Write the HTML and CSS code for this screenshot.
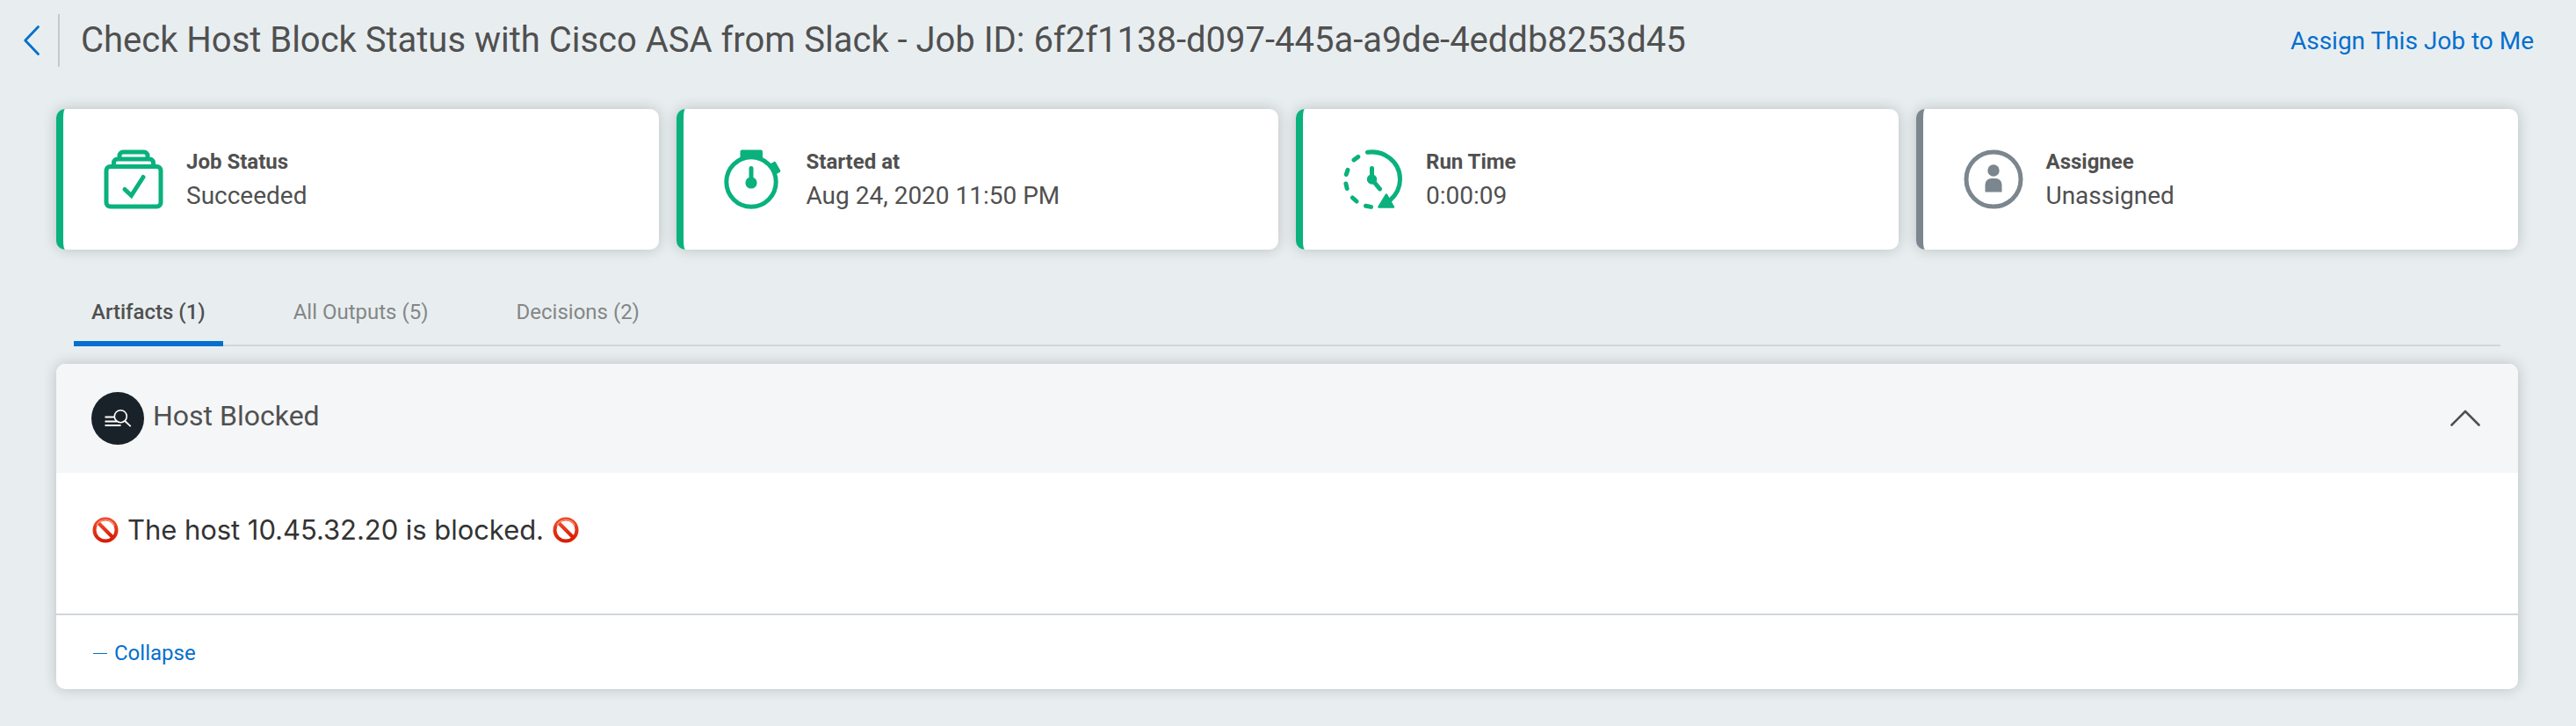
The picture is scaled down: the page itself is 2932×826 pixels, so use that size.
FILE: index.html
```html
<!DOCTYPE html>
<html lang="en">
<head>
<meta charset="utf-8">
<title>Job Details</title>
<link rel="stylesheet" href="styles.css">
</head>
<body>
<header class="topbar">
  <a class="back" aria-label="Back"><svg width="20" height="36" viewBox="0 0 20 36"><path d="M17.500 2.500 2.700 18 17.500 33.500"/></svg></a>
  <h1 class="title">Check Host Block Status with Cisco ASA from Slack - Job ID: 6f2f1138-d097-445a-a9de-4eddb8253d45</h1>
  <a class="assign">Assign This Job to Me</a>
</header>
<main class="content">
  <section class="cards">
    <article class="card">
      <svg class="card-icon" viewBox="0 0 68 68"><g fill="none" stroke="currentColor" stroke-width="5"><rect x="3" y="19.500" width="62" height="45.500" rx="4.500"/><path d="M11.500 18v-3a4 4 0 0 1 4-4h37a4 4 0 0 1 4 4v3M18 10V7a4 4 0 0 1 4-4h24a4 4 0 0 1 4 4v3"/><path d="m24 45.500 7.500 7L45 31.500" stroke-linecap="round"/></g></svg>
      <div class="card-text"><span class="label">Job Status</span><span class="value">Succeeded</span></div>
    </article>
    <article class="card">
      <svg class="card-icon" viewBox="0 0 68 68"><circle cx="31" cy="37" r="28.200" fill="none" stroke="currentColor" stroke-width="5"/><rect x="18.500" y="0.500" width="25.500" height="10" rx="2" fill="currentColor"/><rect x="54" y="14.500" width="8" height="13.500" rx="1.500" transform="rotate(-29 58 21)" fill="currentColor"/><path d="M31 21.500V38" stroke="currentColor" stroke-width="5" stroke-linecap="round"/><circle cx="31" cy="38" r="6.600" fill="currentColor"/></svg>
      <div class="card-text"><span class="label">Started at</span><span class="value">Aug 24, 2020 11:50 PM</span></div>
    </article>
    <article class="card">
      <svg class="card-icon" viewBox="0 0 68 68"><g fill="none" stroke="currentColor" stroke-width="5" stroke-linecap="round"><path d="M27.500 3.300C45 .6 64.500 13 64.500 34c0 10-4.500 18-11.500 24"/><path d="m12 12 4.800-3.600M3.300 28.500l1.700-5.200M2.900 39l1.300 5.500M10.500 55l4.500 4M25.500 64.200l6 1.200M32.500 21.500V34l9 11"/></g><circle cx="32.500" cy="34" r="5.700" fill="currentColor"/><path d="m49 51.500 8 14H40.500Z" fill="currentColor" stroke="currentColor" stroke-width="2.500" stroke-linejoin="round"/></svg>
      <div class="card-text"><span class="label">Run Time</span><span class="value">0:00:09</span></div>
    </article>
    <article class="card card-muted">
      <svg class="card-icon" viewBox="0 0 68 68"><circle cx="34" cy="34" r="31" fill="none" stroke="currentColor" stroke-width="5"/><circle cx="34" cy="24" r="6.700" fill="currentColor"/><path d="M24.500 48.500V40a7 7 0 0 1 7-7h5a7 7 0 0 1 7 7v8.500Z" fill="currentColor"/></svg>
      <div class="card-text"><span class="label">Assignee</span><span class="value">Unassigned</span></div>
    </article>
  </section>
  <nav class="tabs">
    <a class="tab tab-active">Artifacts (1)</a>
    <a class="tab">All Outputs (5)</a>
    <a class="tab">Decisions (2)</a>
  </nav>
  <section class="panel">
    <header class="panel-head">
      <svg class="badge" viewBox="0 0 60 60"><circle cx="30" cy="30" r="30" fill="#1a2229"/><g fill="none" stroke="#fff"><path d="M15.500 28.500H26M15.500 33.500H29M15.500 38h18" stroke-width="1.800"/><circle cx="33.300" cy="27.700" r="7" fill="#1a2229" stroke-width="1.600"/><path d="m38.200 33 6.500 6.200" stroke-width="1.800"/></g></svg>
      <h2 class="panel-title">Host Blocked</h2>
      <svg class="chevron" width="36" height="20" viewBox="0 0 36 20"><path d="m2.500 17.500 15.500-15.500 15.500 15.500"/></svg>
    </header>
    <div class="panel-body">
      <svg class="no-entry" viewBox="0 0 30 30"><defs><linearGradient id="red" x1="0" y1="0" x2="0" y2="1"><stop offset="0" stop-color="#ee4a2c"/><stop offset="1" stop-color="#d81e05"/></linearGradient></defs><g fill="none" stroke="url(#red)" stroke-width="4"><circle cx="15" cy="15" r="12.500"/><path d="m6.500 6.500 17 17"/></g><path class="shine" d="M5 9.500a11.500 11.500 0 0 1 20 0"/></svg>
      <p class="message">The host 10.45.32.20 is blocked.</p>
      <svg class="no-entry" viewBox="0 0 30 30"><g fill="none" stroke="url(#red)" stroke-width="4"><circle cx="15" cy="15" r="12.500"/><path d="m6.500 6.500 17 17"/></g><path class="shine" d="M5 9.500a11.500 11.500 0 0 1 20 0"/></svg>
    </div>
    <footer class="panel-foot"><span class="dash"></span><a class="collapse">Collapse</a></footer>
  </section>
</main>
</body>
</html>
```
FILE: styles.css
```css
* { box-sizing: border-box; }
body { margin: 0; min-height: 826px; background: #e8eef0; color: #505050; font-family: Roboto, sans-serif; }
h1, h2, p { margin: 0; font-weight: 400; }
.topbar { display: flex; align-items: center; height: 92px; padding: 0 48px 0 26px; }
.back { display: flex; align-items: center; width: 42px; height: 60px; border-right: 2px solid #c5cacd; }
.back svg { fill: none; stroke: #056fce; stroke-width: 2.8; stroke-linecap: round; stroke-linejoin: round; }
.title { margin-left: 24px; font-size: 40px; line-height: 60px; letter-spacing: -0.015px; white-space: nowrap; }
.assign { margin-left: auto; padding-top: 1px; color: #056fce; font-size: 28px; line-height: 33px; }
.content { padding: 32px 66px 0 64px; }
.cards { display: grid; grid-template-columns: repeat(4, 1fr); gap: 20px; }
.card { display: flex; align-items: center; height: 160px; padding-left: 46px; color: #0ab17d; background: #fff; border-left: 8px solid #0ab17d; border-radius: 10px; box-shadow: 0 0 16px rgba(0, 0, 0, .2); }
.card-muted { color: #7b868e; border-left-color: #7b868e; }
.card-icon { width: 68px; height: 68px; }
.card-text { display: flex; flex-direction: column; margin-left: 26px; padding-top: 2px; color: #505050; }
.label { font-size: 24px; font-weight: 700; line-height: 36px; }
.value { font-size: 28px; line-height: 42px; }
.tabs { display: flex; height: 68px; margin: 42px 20px 20px; border-bottom: 2px solid #d0d7db; }
.tab { height: 68px; margin-right: 60px; padding: 11px 20px 0; color: #858686; font-size: 24px; line-height: 36px; }
.tab-active { color: #505050; font-weight: 500; border-bottom: 6px solid #056fce; }
.panel { height: 370px; overflow: hidden; background: #fff; border-radius: 10px; box-shadow: 0 0 16px rgba(0, 0, 0, .2); }
.panel-head { display: flex; align-items: center; height: 124px; padding: 0 42px 0 40px; background: #f4f6f8; }
.badge { width: 60px; height: 60px; }
.panel-title { margin: 0 auto 6px 10px; font-size: 32px; line-height: 48px; }
.chevron { fill: none; stroke: #505050; stroke-width: 2.6; stroke-linecap: round; stroke-linejoin: round; }
.panel-body { display: flex; align-items: flex-start; height: 162px; padding: 40px 41px; border-bottom: 2px solid #d0d7db; }
.no-entry { width: 30px; height: 30px; margin-top: 10px; }
.shine { fill: none; stroke: #ff9a85; stroke-width: 1.2; stroke-linecap: round; }
.message { margin: 1px 10px 0; color: #333; font-family: Inter, sans-serif; font-size: 31px; line-height: 48px; letter-spacing: -0.05px; }
.panel-foot { display: flex; align-items: center; height: 84px; padding-left: 42px; color: #056fce; }
.dash { width: 16px; height: 1px; margin: 2px 8px 0 0; background: #056fce; }
.collapse { padding-top: 2px; font-size: 24px; }
```
